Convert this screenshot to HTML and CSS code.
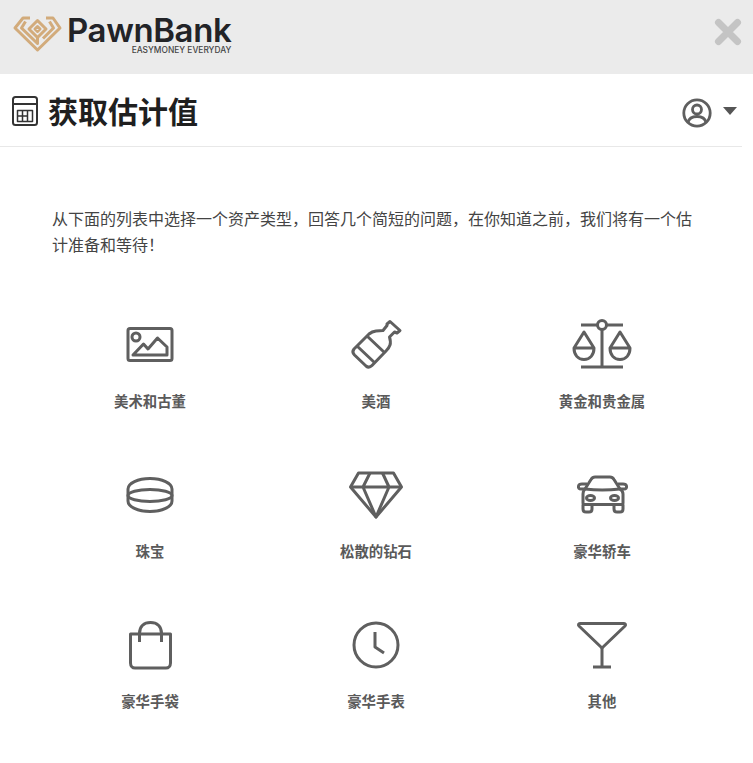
FILE: index.html
```html
<!DOCTYPE html>
<html lang="zh">
<head>
    <meta charset="UTF-8">
    <title>获取估计值</title>
    <link rel="stylesheet" href="styles.css">
</head>
<body>
    <header class="topbar">
        <div class="logo">
            <svg class="logo-mark" viewBox="0 0 50 36">
                <path d="M17 2H10L2 12L24.500 34L47 12L40 2H33"/>
                <path d="M12.500 5.500L8.500 12L24.500 27.500V21"/>
                <path d="M36.500 5.500L40.500 12L30 22.500"/>
                <path d="M24.500 4.500L33 13L24.500 21.500L16 13Z"/>
                <path d="M24.500 10.500L27 13L24.500 15.500L22 13Z"/>
            </svg>
            <div class="logo-text">
                <div class="logo-name">PawnBank</div>
                <div class="logo-tag">EASYMONEY EVERYDAY</div>
            </div>
        </div>
        <svg class="close" viewBox="0 0 26 26"><path d="M3.500 3.500L22.500 22.500M22.500 3.500L3.500 22.500"/></svg>
    </header>

    <div class="titlebar">
        <svg class="calc" viewBox="0 0 26 30">
            <rect x="1" y="1" width="24" height="28" rx="2.500"/>
            <path d="M1 8H25"/>
            <path class="thin" d="M5.500 14.500H20.500V25.500H5.500Z M5.500 20H15.500 M10.500 14.500V25.500 M15.500 14.500V25.500"/>
        </svg>
        <h1>获取估计值</h1>
        <div class="user">
            <svg class="avatar" viewBox="0 0 30 30">
                <circle cx="15" cy="15" r="13.200"/>
                <circle cx="15" cy="11.500" r="4.500"/>
                <path d="M6 24.500C7 20 10 18.500 15 18.500S23 20 24 24.500"/>
            </svg>
            <span class="caret"></span>
        </div>
    </div>

    <main class="content">
        <p class="intro">从下面的列表中选择一个资产类型，回答几个简短的问题，在你知道之前，我们将有一个估计准备和等待！</p>

        <div class="assets">
            <a class="asset">
                <svg class="ico" viewBox="0 0 60 60">
                    <rect x="8" y="13.500" width="44" height="32" rx="2"/>
                    <circle cx="16" cy="22" r="4"/>
                    <path d="M13 40L23.500 29L28 34L37.500 23L47 32V40Z"/>
                </svg>
                <span>美术和古董</span>
            </a>
            <a class="asset">
                <svg class="ico" viewBox="0 0 60 60">
                    <path d="M44 6.500L54 15.500L51 18L48.500 17L43.500 22Q45 27 44 30Q43 33 40 36L26 50.500Q23 53.500 20 51L8.500 40Q5.500 37 8 34L23 19Q26 16.500 30 16Q34 15.500 37 15.500L41 10.500L41 9Z"/>
                    <path d="M21 21L39 38M11 31L29 48"/>
                </svg>
                <span>美酒</span>
            </a>
            <a class="asset">
                <svg class="ico" viewBox="0 0 60 60">
                    <path d="M9 10H25M35 10H51M30 15V52M9 52H51"/>
                    <circle cx="30" cy="10" r="4.500"/>
                    <path d="M12 17L2 33C2 40 6 44.500 12 44.500S22 40 22 33ZM2 33H22"/>
                    <path d="M48 17L38 33C38 40 42 44.500 48 44.500S58 40 58 33ZM38 33H58"/>
                </svg>
                <span>黄金和贵金属</span>
            </a>
            <a class="asset">
                <svg class="ico" viewBox="0 0 60 60">
                    <rect x="8" y="13.500" width="44" height="33" rx="22" ry="10.500"/>
                    <ellipse cx="30" cy="30.500" rx="22" ry="6"/>
                </svg>
                <span>珠宝</span>
            </a>
            <a class="asset">
                <svg class="ico" viewBox="0 0 60 60">
                    <path d="M12.500 8H47.500L55.500 22L30 52L4.500 22Z"/>
                    <path d="M4.500 22H55.500M24 8L17 22L30 52L43 22L36.500 8"/>
                </svg>
                <span>松散的钻石</span>
            </a>
            <a class="asset">
                <svg class="ico" viewBox="0 0 60 60">
                    <path d="M11 38V29Q11 26 13 24L19 14.500Q20.500 12 23 12H38Q40.500 12 42 14.500L48 24Q51 26 51 29V38Q51 39.500 49.500 39.500H12.500Q11 39.500 11 38Z"/>
                    <path d="M13 24Q30 26 48 24M13 24H9Q6 24 6.500 21Q7 19 10 19H15M48 24H52Q55 24 54.500 21Q54 19 51 19H46"/>
                    <path d="M11 39.500V44Q11 47 14 47H17Q20 47 20 44V39.500M42 39.500V44Q42 47 45 47H48Q51 47 51 44V39.500"/>
                    <ellipse cx="18.500" cy="33" rx="4" ry="2.500"/>
                    <ellipse cx="42.500" cy="33" rx="4" ry="2.500"/>
                </svg>
                <span>豪华轿车</span>
            </a>
            <a class="asset">
                <svg class="ico" viewBox="0 0 60 60">
                    <path d="M10.500 19H50.500V48C50.500 51 48.500 53 46 53H15C12.500 53 10.500 51 10.500 48Z"/>
                    <path d="M19.500 27V18.500C19.500 11.500 24 7.500 30.500 7.500S41.500 11.500 41.500 18.500V27"/>
                </svg>
                <span>豪华手袋</span>
            </a>
            <a class="asset">
                <svg class="ico" viewBox="0 0 60 60">
                    <circle cx="30" cy="30" r="22"/>
                    <path d="M29 17V32L38 38"/>
                </svg>
                <span>豪华手表</span>
            </a>
            <a class="asset">
                <svg class="ico" viewBox="0 0 60 60">
                    <path d="M8 8.500H52C53.500 8.500 54 10 53 11L30 33L7 11C6 10 6.500 8.500 8 8.500Z"/>
                    <path d="M30 33V52M21 52H39"/>
                </svg>
                <span>其他</span>
            </a>
        </div>
    </main>
</body>
</html>
```

FILE: styles.css
```css
body {
    margin: 0;
    background-color: #fff;
    font-family: "Liberation Sans", "Noto Sans CJK SC", sans-serif;
    color: #444;
}
svg {
    display: block;
    fill: none;
    overflow: visible;
    stroke-linejoin: round;
}
.topbar {
    display: flex;
    align-items: center;
    justify-content: space-between;
    height: 74px;
    padding: 0 12px 0 13px;
    background-color: #ebebeb;
}
.logo {
    display: flex;
    align-items: flex-start;
    gap: 4px;
    height: 40px;
}
.logo-mark {
    width: 50px;
    height: 36px;
    margin-top: -1px;
    stroke: #d2ab7b;
    stroke-width: 3;
}
.logo-text {
    display: flex;
    flex-direction: column;
    align-items: flex-end;
    margin-top: -1px;
}
.logo-name {
    font-family: Inter, sans-serif;
    font-size: 33px;
    font-weight: 600;
    line-height: 29px;
    letter-spacing: -0.400px;
    color: #222327;
}
.logo-tag {
    margin-top: 1px;
    font-family: Inter, sans-serif;
    font-size: 8.400px;
    font-weight: 500;
    line-height: 9px;
    color: #444;
}
.close {
    width: 26px;
    height: 26px;
    margin-bottom: 10px;
    stroke: #c4c4c4;
    stroke-width: 7;
    stroke-linecap: round;
}
.titlebar {
    display: flex;
    align-items: center;
    width: 742px;
    height: 73px;
    padding-left: 12px;
    box-sizing: border-box;
    border-bottom: 1px solid #e8e8e8;
}
.calc {
    width: 26px;
    height: 30px;
    margin: 1px 10px 0 0;
    stroke: #333;
    stroke-width: 2;
}
.calc .thin {
    stroke-width: 1.500;
}
h1 {
    margin: 0;
    font-size: 30px;
    font-weight: bold;
    color: #1f1f1f;
}
.user {
    display: flex;
    align-items: center;
    margin: 5px 5px 0 auto;
    gap: 11px;
}
.avatar {
    width: 30px;
    height: 30px;
    stroke: #5f5f5f;
    stroke-width: 2.800;
}
.caret {
    width: 0;
    height: 0;
    margin-bottom: 3px;
    border-left: 7px solid transparent;
    border-right: 7px solid transparent;
    border-top: 8px solid #555;
}
.content {
    padding: 60px 0 0 37px;
    width: 678px;
}
.intro {
    margin: 0 0 56px 15px;
    width: 650px;
    font-size: 16px;
    line-height: 26px;
}
.assets {
    display: grid;
    grid-template-columns: repeat(3, 226px);
    grid-auto-rows: 150px;
}
.asset {
    display: flex;
    flex-direction: column;
    align-items: center;
    font-size: 14.400px;
    font-weight: bold;
    line-height: 20px;
    color: #5a5a5a;
}
.asset span {
    margin-top: 17px;
}
.ico {
    width: 60px;
    height: 60px;
    stroke: #5f5f5f;
    stroke-width: 3;
}
```
